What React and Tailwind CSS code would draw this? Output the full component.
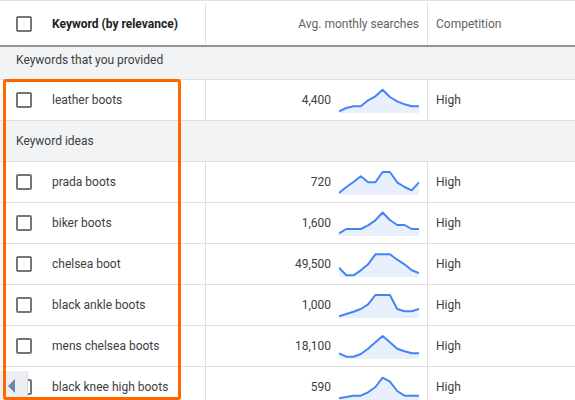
import React from "react";

const rows = [
  { name: "leather boots", vol: "4,400", pts: [22.3, 19, 17.3, 17.3, 11.3, 7.3, 0.7, 8, 12.3, 15.3, 17.3, 17.3] },
  { section: "Keyword ideas" },
  { name: "prada boots", vol: "720", pts: [22, 16, 11, 5.3, 11.3, 11.3, 1, 1, 11.3, 16, 19.3, 11.3] },
  { name: "biker boots", vol: "1,600", pts: [21.3, 17, 17, 17, 13.3, 8.3, 0.5, 8, 13, 13, 17, 17] },
  { name: "chelsea boot", vol: "49,500", pts: [14.7, 22.3, 22.3, 17.3, 11.3, 1.3, 1.3, 1.3, 6.7, 11.3, 17.3, 20] },
  { name: "black ankle boots", vol: "1,000", pts: [22.3, 20, 17.7, 15, 10.3, 1, 1, 1, 15, 17.3, 17.3, 15] },
  { name: "mens chelsea boots", vol: "18,100", pts: [18.3, 21.7, 21.7, 19, 13.7, 7.3, 1, 7.3, 13.7, 16.3, 18.3, 18.3] },
  { name: "black knee high boots", vol: "590", pts: [22.3, 21, 19.7, 19.7, 16.3, 11, 1.7, 5.7, 15, 19.7, 19.7, 19.7] },
];

const Checkbox = () => (
  <span className="w-4 h-4 shrink-0 border-2 border-[#757575] rounded-[2px]" />
);

const Spark = ({ pts }) => {
  const step = 80 / (pts.length - 1);
  const line = pts.map((y, i) => `${(i * step).toFixed(1)},${y + 1}`).join(" ");
  return (
    <svg width="80" height="25" viewBox="0 0 80 25" className="shrink-0">
      <polygon points={`0,25 ${line} 80,25`} fill="#e8f0fe" />
      <polyline points={line} fill="none" stroke="#4285f4" strokeWidth="2" strokeLinejoin="round" />
    </svg>
  );
};

export default function App() {
  return (
    <div className="relative w-[575px] h-[400px] overflow-hidden bg-white font-['Roboto',sans-serif]">
      <div className="flex h-[47px] pt-0.5 border-t border-[#e0e0e0] border-b-2 border-b-[#8f9396] text-[12px]">
        <div className="w-[206px] flex items-center gap-5 pl-4 border-r border-[#e0e0e0]">
          <Checkbox />
          <span className="font-bold text-[#202124]">Keyword (by relevance)</span>
        </div>
        <div className="w-[222px] flex items-center justify-end pr-2 border-r border-[#e0e0e0] text-[#5f6368]">
          Avg. monthly searches
        </div>
        <div className="flex-1 flex items-center pl-2 text-[#5f6368]">Competition</div>
      </div>

      <div className="flex h-[33px] pb-1.5 pl-4 items-center bg-[#f1f3f4] border-b border-[#e0e0e0] text-[12px] text-[#3c4043]">
        Keywords that you provided
      </div>

      {rows.map((r, i) =>
        r.section ? (
          <div key={i} className="flex items-center h-[41px] pl-4 bg-[#f1f3f4] border-b border-[#e0e0e0] text-[12px] text-[#3c4043]">
            {r.section}
          </div>
        ) : (
          <div key={i} className="flex h-[41px] border-b border-[#e0e0e0] text-[12px] text-[#3c4043]">
            <div className="w-[206px] flex items-center gap-5 pl-4 border-r border-[#e0e0e0]">
              <Checkbox />
              <span>{r.name}</span>
            </div>
            <div className="w-[222px] flex items-center justify-end gap-2 pr-2 border-r border-[#e0e0e0]">
              <span>{r.vol}</span>
              <Spark pts={r.pts} />
            </div>
            <div className="flex-1 flex items-center pl-2">High</div>
          </div>
        )
      )}

      <div className="absolute left-0 top-[371px] w-[28px] h-[29px] bg-[#eceff1] border-r border-[#dadce0] flex items-center pl-2">
        <span className="w-0 h-0 border-y-[7px] border-y-transparent border-r-[7px] border-r-[#6f88a8]" />
      </div>

      <div className="absolute left-[3px] top-[79px] w-[178px] h-[321px] border-[3px] border-[#ff6600] rounded-[3px]" />
    </div>
  );
}
